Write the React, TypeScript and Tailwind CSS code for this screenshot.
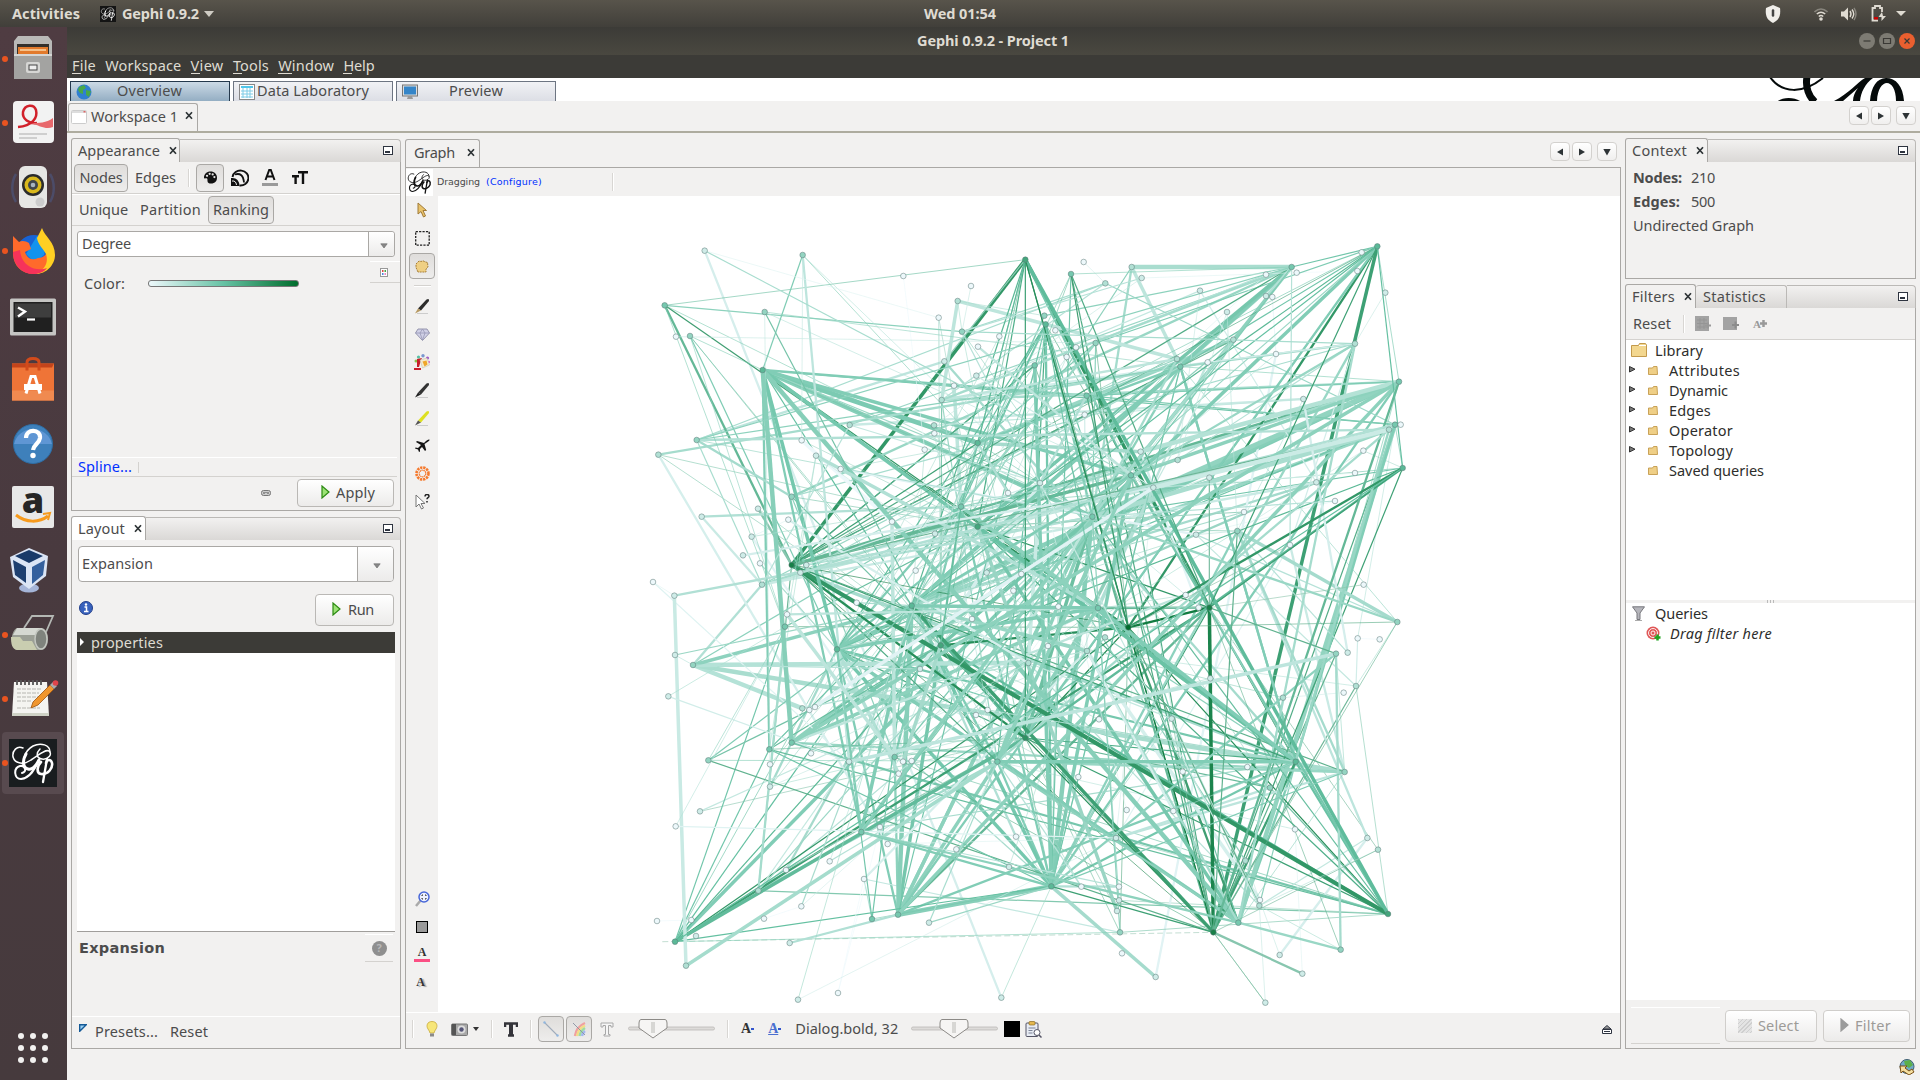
import React, { useLayoutEffect, useRef } from "react";

/* ---------- text that keeps a fixed advance width ---------- */
function T({ w, children, className = "" }: { w: number; children: string; className?: string }) {
  const ref = useRef<HTMLSpanElement>(null);
  useLayoutEffect(() => {
    const el = ref.current;
    if (!el) return;
    el.style.letterSpacing = "0px";
    el.style.width = "auto";
    const natural = el.getBoundingClientRect().width;
    el.style.letterSpacing = (w - natural) / children.length + "px";
    el.style.width = w + "px";
  }, [w, children]);
  return (
    <span ref={ref} className={"mb-[2px] inline-block shrink-0 whitespace-nowrap " + className}>
      {children}
    </span>
  );
}

/* ---------- graph data ---------- */
type N = { x: number; y: number; s: number };
const tile = (ox: number, oy: number, data: string): N[] =>
  data.trim().split(/\s+/).map((t) => {
    const [x, y, s] = t.split(",").map(Number);
    return { x: ox + x / 3, y: oy + y / 3, s };
  });

const groups: Record<string, N[]> = {
  A: tile(192, 24, `224,92,1 518,105,3 104,256,4 404,276,3 820,168,0 1023,198,0 983,243,2 1186,119,6 926,293,0 996,335,3
    1108,349,0 1044,380,0 138,350,0 180,348,3 398,450,5 943,424,1 1039,467,1 972,497,0 935,540,2 1214,436,4
    1243,287,3 1247,313,5 200,660,3 85,704,2 515,661,0 659,615,2 558,707,1 632,747,0 912,616,2 913,640,0
    884,689,0 1043,669,5 485,830,3 384,866,1 215,890,1 475,899,0 365,950,1 339,1006,1 390,1030,0 485,1035,8
    529,1035,1 511,1058,1 396,1094,2 69,1086,0 133,1127,1 786,905,0 993,860,4 1043,920,6 915,941,1 857,1052,0
    1070,1058,1 1174,1062,0 1134,819,0 1150,1112,0 845,1157,5 680,1148,0 471,1183,0 465,1220,4 1230,789,1 1026,1197,0`),
  B: tile(582, 24, `153,162,4 191,126,0 335,141,2 365,174,1 256,190,2 815,141,4 830,158,0 738,164,0 1072,79,5 1025,97,0
    1012,153,0 1096,218,1 540,212,1 738,228,1 757,231,0 621,276,1 640,359,2 227,369,3 106,331,0 168,382,0
    140,411,0 471,417,2 481,440,4 563,427,0 768,402,0 1005,371,2 1137,485,4 200,527,4 194,584,0 850,537,1
    1107,629,2 1125,614,4 1142,614,0 1030,692,0 1148,744,5 1005,759,0 889,787,1 945,843,0 362,695,1 473,720,2
    333,766,4 568,773,1 400,803,1 672,876,0 652,933,3 528,944,1 217,890,4 810,975,0 1031,1094,0 497,1125,0
    568,1163,8 536,1163,0 234,1164,4 325,1222,9 1132,1206,3 115,1160,0`),
  C: tile(192, 404, `135,165,1 189,195,3 115,289,1 621,148,5 932,136,6 870,207,1 517,325,2 538,330,0 555,321,0 485,428,4
    418,448,4 235,481,3 543,460,0 420,493,0 657,485,1 420,560,1 210,634,1 137,679,0 1195,189,2 1038,345,0
    1073,330,0 1186,414,7 794,471,4 819,485,0 845,483,0 806,521,0 1102,485,4 694,696,4 750,681,0 773,732,0
    599,784,0 979,748,0 1158,710,0 1137,801,1 468,810,0 385,872,2 702,837,0 514,919,0 402,956,0 81,963,0
    184,960,0 198,1008,1 135,1025,5 168,1097,2 479,1029,1 726,957,4 804,944,4 897,968,1 504,1199,1 624,1179,0
    1114,1193,1`),
  D: tile(582, 404, `255,112,2 201,153,2 84,138,0 237,358,0 455,356,1 175,531,0 488,515,0 320,630,0 460,633,0 288,714,1
    94,859,5 184,860,0 297,860,0 297,901,1 291,933,1 300,997,3 306,1060,0 407,1131,1 580,997,8 655,968,4
    718,917,2 720,900,0 676,782,2 750,563,3 827,485,5 682,501,0 825,688,0 789,293,2 948,161,3 983,158,1
    1013,115,0 1079,118,0 1008,258,2 971,278,0 974,516,3 1042,714,1 1074,749,2 1104,942,6 962,1049,3 847,1121,1
    779,1065,1 736,1208,1 571,235,1`),
};
const node = (id: string): N => groups[id[0]][Number(id.slice(1))];
const allNodes = Object.values(groups).flat();

/* each record: source, then target:weight list */
const links = `
A0 C50:3 B40:2 A8:1|A1 A14:2 C14:3 A24:1 A31:1 A58:1|A2 A7:1 A9:2 A39:3 B53:2 B46:1 A57:1|A3 C13:1 C4:2 B42:1 B22:1
A4 A30:1|A5 A9:1|A6 A18:4 B21:4 A9:1|A7 A39:4 B50:4 B53:2 C21:2 D37:4 A46:1 A31:2 C4:1 A47:2 A54:2 A15:2 B40:3 D18:2
A8 A18:1|A9 B25:2 B46:1 A58:2|A12 B17:1|A13 A14:1 C4:1 A57:1 C3:2 A54:1
A14 B40:4 B46:5 B53:2 B31:2 C9:5 C3:4 D19:5 C10:3 C27:3 D24:4 A54:2 A47:1 B27:3 A31:5
A22 B4:2 A15:3 B5:2 B30:3 A32:3 A42:2 B46:1 B22:2|A23 B22:3 C29:3 A47:1 C4:1|A25 B5:2 B29:3 A42:2|A26 A57:1 B52:4 C10:1
A24 A45:4|A27 B45:3|A34 A46:3 A42:3|A33 A39:3 C4:1|A36 C23:3 A35:1 B40:1|A37 B42:3|A44 B46:3 C43:4|A43 A44:1 C14:2
A42 B36:3 B26:3|A32 B25:2 B5:3 C22:2|A40 B30:3 B26:3|A41 B31:3 B22:2
A39 D37:6 C21:3 B5:2 B8:1 B22:2 B16:2 D18:1 A19:2 B26:3 C35:2 B30:2 D24:2 C26:2 A31:2 D34:2 B53:1 B40:1
A20 A6:1 A54:2 A46:1|A21 A54:2 C21:2 B53:1 A46:2 C26:2 B46:3 D19:2 A31:2 C46:2 C3:2 B50:1 D10:3|A19 A39:2 B53:1 C3:1
B0 B53:2 B50:2 A54:1 D10:2 B5:1 D18:2 A47:1|B1 B4:1|B2 B5:5 B21:4 B46:3 A54:2|B3 B6:1 A28:1 A9:2|B4 A9:2 B31:2 A18:2
B5 B46:4 A47:4 A54:4 B22:5 B8:2 A20:2 C27:2 B47:2 A18:3 B13:3
B7 A19:2 A58:1|B12 A18:2 B36:2 B39:1|B14 B24:2|B24 D17:3 B22:1|B15 B44:1 B39:1|B16 A54:2 B46:3 B42:2|B17 A46:3 B53:1 B8:2 A31:2
B8 C21:2 B53:3 D18:4 B34:2 B50:2 A54:2 A47:2 C46:3 B38:2 B46:4 B26:1 B22:2 B27:1|B9 B8:1|B10 B6:1|B11 B25:1
B21 B27:2 B46:3 A18:3|B22 A31:3 A54:4 C3:3 B54:1 D24:3 B46:3 A42:2 D10:2|B23 A18:3 B25:2
B25 A54:3 D19:3 B22:3 B39:2 D10:3 B47:2
B26 B22:1 A18:3 B46:5 A54:5 C3:4 C9:4 B38:5 D18:3 C46:4 B40:4 D10:3 D24:1 B27:2
B29 A28:2 B44:1|B30 A42:3 A54:4 B42:5 C26:3 D24:3 B46:5 A41:2|B31 D24:3 D19:5 B27:2 D18:2 B46:3 C3:2|B33 B44:1 B34:1|B35 B42:1
B34 B53:3 B50:2 C21:3 C4:2 D18:2 B46:2 A46:1 B31:1|B36 C4:3 A54:3|B37 B45:1 B46:2|B41 B50:2 B46:1|B43 A54:2
B44 B54:4 D10:3 D34:3 D35:3 B45:1 A47:1|B45 B54:2|B47 D9:2 B53:1|B48 B50:1|B49 C9:3 C3:1
B50 D18:4 B53:3 C42:3 A47:2 D24:2 D10:2 C46:3 B52:3|B52 A54:4 D24:4 A46:4 C26:4 C9:4
B53 C42:2 D18:2 C21:2 D37:2 A57:1 D19:3 A47:3 C4:1|B54 B46:3 D18:1 B53:1 D32:1
C0 A54:2 C1:1|C1 A54:4 C18:5 D34:5 C6:5 A42:3 A46:2 C5:2|C2 C14:2 A57:1|C11 A54:2 D24:1 D18:2 C4:2 A57:1|C15 C22:1 A54:1
C16 C18:2 C21:1|C17 D9:2 A57:1|C10 A54:2 C21:1 D37:2 C4:2|C9 B46:4 D37:3 D34:3 C4:4|C12 A54:1|C35 D37:2 C26:3 B46:2 A57:3 C14:2
C42 C21:4 D10:2 D15:1 A57:2 C3:1 C4:2 B46:4 A54:2 C10:2 B34:2|C43 C26:4|C44 C46:3|C45 C3:2 D10:1 A54:2
C46 D10:5 A54:5 C4:4 B46:4 C26:4 C3:3|C47 D10:2 C26:2|C48 A54:1 D9:1|C49 C36:1 C28:1|C50 D10:1|C39 C40:1|C37 C38:1 D1:1
C36 C45:2 D15:2|C27 D19:3 D10:3 B46:4 C3:3 A54:4|C34 C21:2|C30 C26:2|C29 D9:1|C3 D19:4 D10:4 C21:2 D24:3 A46:3 B40:3 B52:3
C4 D18:1 B46:4 D37:3 A46:3|C22 D18:1 C21:1 C46:3 B46:2 D37:1|C26 D10:3 D24:4 B46:4 D19:3|C21 D18:2 B46:4 D24:2 D37:2 A54:4
D10 B46:5 D24:3 D17:4 A54:4 D34:2 D18:2 D28:3 B40:4|D18 D39:3 D41:1 D24:3 D28:2 D32:2 D22:2 B46:3 B40:2 B44:2 B27:2 D4:1 A54:4
D37 B40:3 B46:2 A47:2 D23:2 D24:3 D15:1 D32:1 D13:1 D9:1|D19 D38:3 D27:1 D1:3 D34:1 A47:4|D34 C26:3 D9:3 D28:1 B47:3
D35 D40:3 D20:2|D36 B50:1 D18:1 D20:1|D38 D28:3 B50:1 D20:1|D39 D26:1|D40 D22:1|D32 B45:2 D1:1|D30 D32:2 B31:1 D31:1
D28 C14:4 B50:2|D29 B29:3 B44:2|D24 A47:4 C46:3 B22:3 D19:3 A46:3 D20:2|D15 B53:1 C21:1 B46:2|D12 C27:2|D14 C21:1|D20 B53:2 D4:3
D41 D18:1 D20:1|D33 D27:1|D26 C26:1|D23 C21:2 D9:3 C3:2`;

type E = { a: N; b: N; w: number };
const edges: E[] = [];
links.split(/[|\n]/).forEach((rec) => {
  const [src, ...targets] = rec.trim().split(/\s+/);
  if (!src) return;
  targets.forEach((t) => {
    const [id, w] = t.split(":");
    edges.push({ a: node(src), b: node(id), w: Number(w) });
  });
});
const inner = allNodes.filter((n) => n.x > 320 && n.x < 850 && n.y > 120 && n.y < 720);
const hubs = ["A47", "A54", "B46", "C3", "C4", "B42", "A58", "B52", "C26", "A31", "C18", "C22", "D24", "B40", "D10", "A46", "D1"].map(node);
for (let i = 0; i < 150; i++) {
  edges.push({ a: inner[(i * 37) % inner.length], b: hubs[(i * 7) % hubs.length], w: [1, 3, 2, 1, 4, 1, 2][i % 7] });
}
const order = edges.map((e, i) => ({ e, k: (i * 7919) % 613 })).sort((p, q) => p.k - q.k).map((p) => p.e);

const ramp = (s: number): number[] => {
  const lo = [237, 248, 251], mid = [102, 194, 164], hi = [0, 109, 44];
  const t = s / 9;
  const [p, q, f] = t < 0.5 ? [lo, mid, t * 2] : [mid, hi, t * 2 - 1];
  return p.map((v, i) => Math.round(v + (q[i] - v) * f));
};
const rgb = (c: number[]) => `rgb(${c.join(",")})`;
const widths = [0, 0.6, 1.2, 2.3, 3.5, 4.5, 4.2];
/* mid-weight edges are drawn paler than the hairlines, the heaviest one keeps its full tone */
const tone = [1, 0.92, 0.92, 0.8, 0.8, 0.76, 1];

function GraphCanvas() {
  return (
    <svg width="1182" height="816" viewBox="0 0 1182 816" className="block bg-white">
      <path d="M224.300 745.700L775.300 736.300" stroke="#b5d5c8" strokeWidth=".8" strokeDasharray="6 3" />
      {order.map(({ a, b, w }, i) => {
        const dark = a.s + b.s > 12;
        const k = dark ? 0.97 : tone[w];
        const ca = ramp(a.s * k), cb = ramp(b.s * k);
        return (
          <line key={i} x1={a.x} y1={a.y} x2={b.x} y2={b.y} strokeWidth={widths[w]}
            stroke={rgb(ca.map((v, j) => Math.round((v + cb[j]) / 2)))} />
        );
      })}
      {allNodes.map((n, i) => (
        <circle key={i} cx={n.x} cy={n.y} r="2.8" fill={rgb(ramp(n.s))} stroke="#5c7a78" strokeOpacity=".65" strokeWidth=".8" />
      ))}
    </svg>
  );
}

/* ---------- small shared pieces ---------- */
const Close = ({ className = "" }: { className?: string }) => (
  <svg width="8" height="9" viewBox="0 0 8 9" className={"mb-[2px] shrink-0 " + className}>
    <path d="M1 1.200L7 7.800M7 1.200L1 7.800" stroke="#2e3436" strokeWidth="1.700" />
  </svg>
);
const Minimize = () => (
  <svg width="10" height="9" viewBox="0 0 10 9" className="mb-[2px] shrink-0">
    <rect x=".5" y=".5" width="9" height="8" fill="#fff" stroke="#2e3440" />
    <rect x="2" y="5" width="5" height="2" fill="#2e3440" />
  </svg>
);
const VSep = ({ className = "" }: { className?: string }) => (
  <span className={"h-[18px] w-[2px] shrink-0 border-r border-white bg-[#d8d6d3] " + className} />
);
const NavBtn = ({ d, className = "" }: { d: string; className?: string }) => (
  <span className={"flex h-[19px] w-[20px] items-center justify-center rounded-[4px] border border-[#d3d1ce] bg-gradient-to-b from-white to-[#f0efee] " + className}>
    <svg width="10" height="10" viewBox="0 0 10 10"><path d={d} fill="#2e3436" /></svg>
  </span>
);
const NavSet = () => (
  <div className="flex">
    <NavBtn d="M8 1.500v7L2 5z" />
    <NavBtn d="M2 1.500v7L8 5z" className="ml-[2px]" />
    <NavBtn d="M1.300 2h7.400L5 8.500z" className="ml-[5px] border-[#aaa8a5]" />
  </div>
);
function TabBar({ title, w, tabW, white, extra }: { title: string; w: number; tabW: string; white?: boolean; extra?: React.ReactNode }) {
  return (
    <div className="flex h-[24px] shrink-0">
      <div className={"flex shrink-0 items-center rounded-t-[3px] border-l border-r border-t border-[#aaa8a5] pl-[6px] pt-px " + tabW + (white ? " bg-white" : " bg-[#f2f1f0]")}>
        <T w={w}>{title}</T>
        <Close className="ml-[9px]" />
      </div>
      {extra}
      <div className="mt-px flex flex-1 items-center justify-end rounded-tr-[4px] border-r border-t border-[#bbb9b6] bg-gradient-to-b from-[#f2f1f0] to-[#dad8d6] pr-[7px]">
        <Minimize />
      </div>
    </div>
  );
}
const ComboArrow = () => (
  <svg width="8" height="6" viewBox="0 0 8 6"><path d="M.8.8h6.400L4 5z" fill="#888" stroke="#666" strokeWidth=".6" /></svg>
);
const Play = ({ gray }: { gray?: boolean }) => (
  <svg width="9" height="14" viewBox="0 0 9 14" className="mb-[2px] shrink-0">
    <path d="M1 1v12l7-6z" fill={gray ? "#9b9b9b" : "#9be275"} stroke={gray ? "#9b9b9b" : "#2c8a12"} strokeWidth="1.200" />
  </svg>
);
const pressed = "border border-[#aaa8a5] bg-gradient-to-b from-[#dfdddb] to-[#eeedec] rounded-[4px]";
const btn = "flex items-center rounded-[4px] border border-[#bab8b5] bg-gradient-to-b from-white to-[#ecebea]";

const Script = ({ size, color, bg }: { size: number; color: string; bg: string }) => (
  <svg width={size} height={size} viewBox="0 0 48 48" className="shrink-0">
    <rect width="48" height="48" fill={bg} />
    <g fill="none" stroke={color} strokeLinecap="round">
      <path strokeWidth="1.500" d="M14 9C8 6 3 12 4 18c2 7 11 8 18 3 8-5 14-11 18-9 4 3-1 9-7 8-6-1-6-6-2-10" />
      <path strokeWidth="1.500" d="M41 13c0-7-9-10-17-6-9 5-12 17-8 23" />
      <path strokeWidth="3" d="M17 15c-4 7-3 14 2 15 4 1 8-3 11-9" />
      <path strokeWidth="2" d="M30 21c-4 9-9 18-18 19C5 40 4 29 11 27c6-1 7 6 2 7" />
      <path strokeWidth="2.300" d="M34 43l4-23" />
      <path strokeWidth="2.600" d="M32 23c-4 4-5 11 0 12 7 1 12-6 11-11-1-4-5-4-6 0" />
    </g>
  </svg>
);

/* ---------- dock ---------- */
const dock: { dot?: boolean; art: React.ReactNode }[] = [
  { dot: true, art: (
    <g transform="translate(0 1)">
      <path d="M5 5l4-5h30l4 5v38H5z" fill="#b9b9b7" /><rect x="8" y="8" width="32" height="14" fill="#33302c" />
      <path d="M9 11h30v9H9z" fill="#e27a2c" /><path d="M11 14h26" stroke="#fbd9a8" strokeWidth="1.500" />
      <rect x="5" y="18" width="38" height="25" fill="#a3a3a1" /><rect x="5" y="18" width="38" height="2" fill="#d6d6d4" />
      <rect x="17" y="26" width="14" height="11" rx="2" fill="#d6d6d4" /><rect x="20" y="29" width="8" height="5" fill="#eee" stroke="#444" />
    </g>) },
  { dot: true, art: (
    <g transform="translate(0 -1)">
      <rect x="4" y="3" width="41" height="42" rx="4" fill="#f2f2f2" />
      <path d="M9 29c14-1 20-9 18-17-2-6-11-6-13 2-1 7 6 12 14 11" fill="none" stroke="#d1202a" strokeWidth="2.500" />
      <path d="M22 25c8 0 15 0 22-5v9c-7 3-13-1-22-4z" fill="#e8686c" />
      <path d="M10 36h28M10 40h18" stroke="#c4c4c4" strokeWidth="1.500" />
    </g>) },
  { art: (
    <g transform="translate(0 1)">
      <path d="M7 10c-5 8-5 20 0 28M41 10c5 8 5 20 0 28" stroke="#4c4c68" strokeWidth="2.500" fill="none" />
      <rect x="10" y="2" width="28" height="42" rx="6" fill="#e6e6e4" /><circle cx="24" cy="21" r="11" fill="#2a2b2c" />
      <circle cx="24" cy="21" r="8.500" fill="#d9b81c" /><circle cx="24" cy="21" r="5" fill="#3f454b" /><circle cx="24" cy="21" r="2.300" fill="#a7b4c0" />
      <circle cx="31" cy="38" r="4.500" fill="#ccc" />
    </g>) },
  { dot: true, art: (
    <g transform="translate(0 1)">
      <circle cx="25" cy="25" r="18" fill="#1763d6" /><path d="M28 8c6 5 9 12 7 19l-9 8-9-9z" fill="#1393ee" />
      <path d="M4 8l6 6c3-2 7-1 10 1l2 6-6 3c2 7 8 9 13 6 6 0 10-4 10-12l6 7c0 13-9 21-20 21C12 46 4 37 4 25z" fill="#ff6a2b" />
      <path d="M28 10l5-10c3 9 13 14 13 27 0 10-9 19-19 19 8-4 13-11 10-20-3-6-8-9-9-16z" fill="#ffcf23" />
      <path d="M4 24c0 13 9 22 20 22 6 0 11-2 14-6-10 4-26-1-27-18z" fill="#f6335a" />
    </g>) },
  { art: (
    <g transform="translate(0 1.500)">
      <rect x="1" y="6" width="46" height="37" rx="1.500" fill="#c5c5c3" /><rect x="4.500" y="9.500" width="39" height="30" fill="#202020" />
      <rect x="6" y="11" width="36" height="14" fill="#3e3e3e" />
      <path d="M9 15l7 4-7 5" stroke="#fff" strokeWidth="2.400" fill="none" /><path d="M18 27h8" stroke="#fff" strokeWidth="2.200" />
    </g>) },
  { art: (
    <g transform="translate(0 1.500)">
      <path d="M3 7h42v37H3z" fill="#ef7437" /><path d="M3 7h42l-2 4H3z" fill="#c4441b" /><path d="M3 34h42v10H3z" fill="#f08a50" />
      <path d="M18 14V6q0-4 6-4t6 4v8" stroke="#d24b1b" strokeWidth="3" fill="none" />
      <path d="M17 37l5-17h4l5 17M15 29h18M15 32h18" stroke="#fff" strokeWidth="3" fill="none" />
    </g>) },
  { art: (
    <g transform="translate(0 1)">
      <circle cx="24" cy="24" r="19.500" fill="#3e80bb" /><path d="M5 24a19.500 19.500 0 0 1 38 0z" fill="#5f96d4" /><circle cx="24" cy="24" r="19.500" fill="none" stroke="#2e6da4" />
      <path d="M17 18c0-10 15-9 14 0-1 6-6 6-7 12" stroke="#fff" strokeWidth="4.200" fill="none" /><circle cx="24" cy="35.500" r="2.700" fill="#fff" />
    </g>) },
  { art: (
    <g>
      <rect x="3" y="3" width="42" height="42" rx="2" fill="#e8e8e8" />
      <text x="24" y="30" fontFamily="Open Sans" fontWeight="800" fontSize="36" textAnchor="middle" fill="#262626">a</text>
      <path d="M7 32c10 8 23 8 32 1" stroke="#f79a1c" strokeWidth="3" fill="none" /><path d="M34 31l7-1-2 7" stroke="#f79a1c" strokeWidth="2" fill="none" />
    </g>) },
  { art: (
    <g>
      <ellipse cx="20" cy="41" rx="10" ry="4.500" fill="#a5b5d8" />
      <path d="M20 1l19 8-2 20-17 13L4 30 1 10z" fill="#dbe5f5" /><path d="M20 3l14 6-14 7L6 9z" fill="#193a69" />
      <path d="M4 13l13 7v16L6 28z" fill="#1d3f70" /><path d="M36 13l-13 7v17l11-9z" fill="#34609d" />
    </g>) },
  { dot: true, art: (
    <g transform="translate(0 2)">
      <path d="M15 15L23 3h21l-10 23" stroke="#b4b8b4" strokeWidth="1.800" fill="none" />
      <path d="M8 15h25c8 2 8 20 0 22H8C1 35 1 18 8 15z" fill="#9b9f96" /><path d="M8 15h25v7H4z" fill="#d5d8d2" />
      <ellipse cx="32" cy="26" rx="6" ry="10" fill="#7f837d" stroke="#c3c6c0" strokeWidth="1.500" /><path d="M2 24h9l3 4h9l5 9H8C3 36 2 31 2 24z" fill="#c9cdb0" />
    </g>) },
  { dot: true, art: (
    <g transform="translate(0 2)">
      <path d="M5 5h33l2 34H3z" fill="#f4f4f1" /><path d="M3 36h37v3H3z" fill="#cfd2c6" />
      <path d="M8 12h25M8 16h22M8 20h24M8 24h14M8 31h23" stroke="#b5b5b2" strokeWidth="1.200" strokeDasharray="4 1" />
      <path d="M8 3v5M12 3v5M16 3v5M20 3v5M24 3v5M28 3v5M32 3v5" stroke="#555" strokeWidth="1.800" />
      <path d="M22 31l2-6L41 8l4 4-16 16z" fill="#f0962e" stroke="#9c5410" strokeWidth=".8" /><path d="M41 8l3-3 4 4-3 3z" fill="#aaa" /><circle cx="46.500" cy="6" r="2.800" fill="#e0444b" />
    </g>) },
];
function Dock() {
  return (
    <aside className="flex w-[67px] shrink-0 flex-col bg-gradient-to-b from-[#4f3c42] via-[#493a3f] to-[#463a3d]">
      <div className="flex flex-col">
        {dock.map((d, i) => (
          <div key={i} className="flex h-[64px] items-center">
            <span className={"ml-[2px] h-[6px] w-[6px] rounded-full " + (d.dot ? "bg-[#e95420]" : "")} />
            <svg width="48" height="48" viewBox="0 0 48 48" className="ml-px shrink-0 overflow-visible">{d.art}</svg>
          </div>
        ))}
        <div className="ml-[2px] mt-px flex h-[62px] w-[62px] items-center rounded-[4px] bg-[#584a4f]">
          <span className="h-[6px] w-[6px] rounded-full bg-[#e95420]" />
          <span className="ml-px"><Script size={48} color="#fff" bg="#191d1f" /></span>
        </div>
      </div>
      <div className="mb-[17px] ml-[18px] mt-auto grid w-[30px] grid-cols-3 gap-[6px]">
        {Array.from({ length: 9 }, (_, i) => <span key={i} className="h-[6px] w-[6px] rounded-full bg-[#f2f1f0]" />)}
      </div>
    </aside>
  );
}

/* ---------- header ---------- */
function TopBar() {
  return (
    <header className="flex h-[27px] shrink-0 items-center bg-gradient-to-b from-[#58544b] to-[#413f3a] font-bold text-[#dfdbd2]">
      <T w={68} className="ml-[12px]">Activities</T>
      <span className="ml-[20px]"><Script size={16} color="#fff" bg="#141414" /></span>
      <T w={77} className="ml-[6px]">Gephi 0.9.2</T>
      <svg width="10" height="6" className="ml-[5px]"><path d="M0 0h10L5 6z" fill="#cfccc4" /></svg>
      <T w={72} className="ml-[710px]">Wed 01:54</T>
      <svg width="16" height="18" viewBox="0 0 16 18" className="ml-[769px]">
        <path d="M8 0l7 3c1 8-1 12-7 15C2 15 0 11 1 3z" fill="#f0eeea" /><path d="M8 5.500v5" stroke="#444" strokeWidth="2.500" strokeLinecap="round" />
      </svg>
      <svg width="14" height="14" viewBox="0 0 14 14" className="ml-[33px]">
        <g fill="none" strokeWidth="1.600"><path d="M.5 5q6.500-6 13 0" stroke="#88857d" /><path d="M2.800 7q4.200-3.500 8.400 0M4.800 9.500q2.200-2 4.400 0" stroke="#dfdbd2" /></g><circle cx="7" cy="12" r="1.800" fill="#dfdbd2" />
      </svg>
      <svg width="16" height="14" viewBox="0 0 16 14" className="ml-[13px]">
        <path d="M0 4.500h3l4-4v13l-4-4H0z" fill="#dfdbd2" /><path d="M9 4q2 3 0 6M11 2.500q3.500 4.500 0 9" stroke="#dfdbd2" fill="none" strokeWidth="1.400" /><path d="M13 1q4 6 0 12" stroke="#88857d" fill="none" strokeWidth="1.400" />
      </svg>
      <svg width="15" height="17" viewBox="0 0 15 17" className="ml-[14px]">
        <path d="M11 7V3H9V1H4v2H1.500v12.500H7" stroke="#dfdbd2" strokeWidth="1.800" fill="none" /><path d="M3 12h4v2.500H3z" fill="#c00" /><path d="M11 7l-3.500 5h3v4L15 11h-3z" fill="#dfdbd2" />
      </svg>
      <svg width="10" height="5" className="ml-[10px]"><path d="M0 0h10L5 5z" fill="#dfdbd2" /></svg>
    </header>
  );
}
const menus: [string, number][] = [["File", 24], ["Workspace", 76], ["View", 33], ["Tools", 36], ["Window", 56], ["Help", 31]];

function TitleAndMenu() {
  return (
    <>
      <div className="flex h-[28px] shrink-0 items-center bg-gradient-to-b from-[#3c3b37] to-[#4a4840] font-bold text-[#dfdbd2]">
        <T w={152} className="ml-[850px]">Gephi 0.9.2 - Project 1</T>
        <div className="ml-[790px] flex gap-[4px]">
          {[["M4.500 8h7", "bg-[#7d7b73]"], ["M4.500 5.500h7v5h-7z", "bg-[#7d7b73]"], ["M5.500 5.500l5 5M10.500 5.500l-5 5", "bg-[#ea5f2f]"]].map(([d, c]) => (
            <span key={d} className={"flex h-[16px] w-[16px] rounded-full " + c}><svg width="16" height="16"><path d={d} stroke="#3a3935" strokeWidth="1.200" fill="none" /></svg></span>
          ))}
        </div>
      </div>
      <nav className="flex h-[23px] shrink-0 items-center gap-[9.300px] bg-[#3c3b37] pb-[2px] pl-[5px] text-[#dfdbd2]">
        {menus.map(([m, w]) => (
          <span key={m} className="relative flex">
            <T w={w}>{m}</T>
            {m !== "Workspace" && <i className={"absolute bottom-[3px] left-0 h-px bg-[#dfdbd2] " + (m === "Window" ? "w-[14px]" : "w-[9px]")} />}
          </span>
        ))}
      </nav>
    </>
  );
}

function Banner() {
  return (
    <div className="flex h-[23px] shrink-0 items-end bg-white pl-[3px]">
      <div className="flex h-[20px] w-[160px] items-center border border-b-0 border-[#24384c] bg-gradient-to-b from-[#ccdae6] to-[#94aec3]">
        <svg width="16" height="16" viewBox="0 0 16 16" className="ml-[5px]"><circle cx="8" cy="8" r="7.500" fill="#2f7fd0" /><path d="M3 3l5-2 2 3-3 2v4l-3-1-2-3zM10 6l5 1-2 6-3-2z" fill="#48a84a" /></svg>
        <T w={65} className="mb-[4px] ml-[25px]">Overview</T>
      </div>
      <div className="ml-[3px] flex h-[20px] w-[160px] items-center border border-b-0 border-[#6d7582] bg-gradient-to-b from-[#f1f2f5] to-[#dcdee5]">
        <svg width="16" height="16" viewBox="0 0 16 16" className="ml-[5px]"><rect x=".5" y=".5" width="15" height="15" fill="#fff" stroke="#888" /><rect x="2" y="2" width="12" height="2" fill="#51c6ea" /><path d="M4 4v10M2 7h12M2 10h12M2 13h12M8 4v10M11 4v10" stroke="#7fcbe6" /></svg>
        <T w={112} className="mb-[4px] ml-[2px]">Data Laboratory</T>
      </div>
      <div className="ml-[3px] flex h-[20px] w-[160px] items-center border border-b-0 border-[#6d7582] bg-gradient-to-b from-[#f1f2f5] to-[#dcdee5]">
        <svg width="16" height="16" viewBox="0 0 16 16" className="ml-[5px]"><rect x=".5" y="1" width="15" height="11" fill="#ddd" stroke="#777" /><rect x="2" y="2.500" width="12" height="8" fill="#3585c8" /><path d="M6 12h4l1 3H5z" fill="#999" /></svg>
        <T w={54} className="mb-[4px] ml-[31px]">Preview</T>
      </div>
      <svg width="150" height="23" viewBox="1765 78 150 23" className="ml-auto mr-[5px]">
        <g fill="none" stroke="#050a0a">
          <path d="M1770 77c12 17 33 17 53 1" strokeWidth="2" /><path d="M1807 77c-2 10 2 20 8 25" strokeWidth="7" />
        </g>
        <path d="M1778 101c5-4 16-4 22 0z" fill="#050a0a" />
        <path d="M1834 101c14-7 24-19 31-23h8c-8 6-12 14-13 23h-7c0-5 2-9 5-13l-15 13z" fill="#050a0a" />
        <path d="M1870 101c1-14 7-23 16-23 10 0 17 8 18 23h-8c0-24-18-24-19 0z" fill="#050a0a" />
      </svg>
    </div>
  );
}

/* ---------- left column ---------- */
function Appearance() {
  return (
    <section className="flex h-[373px] flex-col">
      <TabBar title="Appearance" w={82} tabW="w-[109px]" />
      <div className="flex flex-1 flex-col border border-t-0 border-[#aaa8a5]">
        <div className="flex h-[32px] items-center border-b border-[#d4d2cf] pl-[2px]">
          <span className={"flex h-[28px] w-[54px] items-center justify-center " + pressed}><T w={43}>Nodes</T></span>
          <T w={41} className="ml-[7px]">Edges</T>
          <VSep className="ml-[12px]" />
          <span className={"ml-[6px] flex h-[28px] w-[28px] items-center justify-center " + pressed}>
            <svg width="13" height="13" viewBox="0 0 15 14"><path d="M7.500 0C3 0 0 3 0 7c0 2 2 1 3 1s1 1 1 3 2 3 4 3c5 0 7-3 7-7s-3-7-7.500-7z" fill="#111" /><g fill="#e6e5e4"><circle cx="3.500" cy="5" r="1.300" /><circle cx="6.500" cy="2.800" r="1.300" /><circle cx="10" cy="3.500" r="1.300" /><circle cx="12" cy="6.500" r="1.300" /></g></svg>
          </span>
          <svg width="18" height="18" viewBox="0 0 18 18" className="ml-[7px]"><path d="M1.500 8a8 7.500 0 1 1 7 8.500" fill="none" stroke="#111" strokeWidth="1.900" /><path d="M4 5.500q8-2.500 9 8" fill="none" stroke="#111" strokeWidth="1.800" /><path d="M0 9q8-1 8.500 8H0z" fill="#111" /><path d="M1 12q4-.5 4.500 4" stroke="#f2f1f0" fill="none" /></svg>
          <svg width="16" height="19" viewBox="0 0 16 19" className="ml-[13px]"><path d="M3.500 12L7.200 2h1.600l3.700 10M5 8.500h6" stroke="#111" strokeWidth="2" fill="none" /><rect y="15" width="16" height="3" fill="#9a9a9a" /></svg>
          <svg width="16" height="13" viewBox="0 0 16 13" className="ml-[14px]"><path d="M6 1.200h10M11 1v12M0 5.200h7M3.600 5v8" stroke="#111" strokeWidth="2.400" /></svg>
        </div>
        <div className="flex h-[32px] items-center border-b border-t border-b-[#d4d2cf] border-t-white pl-[7px]">
          <T w={49}>Unique</T><T w={61} className="ml-[12px]">Partition</T>
          <span className={"ml-[7px] flex h-[28px] w-[66px] items-center justify-center " + pressed}><T w={56}>Ranking</T></span>
        </div>
        <div className="ml-[5px] mt-[5px] flex h-[26px] w-[318px] rounded-[3px] border border-[#aaa8a5] bg-white">
          <T w={49} className="ml-[4px] leading-[23px]">Degree</T>
          <span className="ml-auto flex w-[26px] items-center justify-center rounded-r-[3px] border-l border-[#aaa8a5] bg-gradient-to-b from-white to-[#ecebea] pl-[4px] pt-[3px]"><ComboArrow /></span>
        </div>
        <div className="flex h-[44px] items-start pl-[12px] pt-[4px]">
          <T w={41} className="mt-[12px]">Color:</T>
          <span className="ml-[23px] mt-[19px] h-[7px] w-[151px] rounded-[3px] border border-[#777] bg-[linear-gradient(90deg,#edf8fb,#66c2a4_50%,#006d2c)]" />
          <span className="ml-auto flex h-[22px] w-[30px] items-center justify-center border-b border-t border-b-[#d4d2cf] border-t-white pr-[3px]">
            <svg width="8" height="9" viewBox="0 0 8 9"><rect x=".5" y=".5" width="7" height="8" fill="#fff" stroke="#999" /><rect x="2" y="2" width="1.500" height="2" fill="#d44" /><rect x="4.500" y="2" width="1.500" height="2" fill="#4a4" /><rect x="2" y="5" width="1.500" height="2" fill="#48d" /><rect x="4.500" y="5" width="1.500" height="2" fill="#e8b" /></svg>
          </span>
        </div>
        <div className="mt-auto flex h-[20px] w-[325px] items-center border-b border-t border-b-[#d4d2cf] border-t-white pl-[6px] text-[#0030ff]">
          <T w={54}>Spline...</T><span className="ml-[6px] h-[11px] w-px bg-[#d4d2cf]" />
        </div>
        <div className="flex h-[33px] shrink-0 items-center pb-[2px] pr-[6px]">
          <svg width="10" height="6" viewBox="0 0 10 6" className="ml-[189px]"><rect x=".5" y=".5" width="9" height="5" rx="2" fill="#ccc" stroke="#777" /><path d="M2 3h2M6 3h2M4.500 2.500h1" stroke="#555" /></svg>
          <span className={btn + " ml-auto h-[28px] w-[97px] pl-[23px]"}><Play /><T w={39} className="ml-[6px]">Apply</T></span>
        </div>
      </div>
    </section>
  );
}

function Layout() {
  return (
    <section className="mt-[5px] flex h-[533px] flex-col">
      <TabBar title="Layout" w={47} tabW="w-[75px]" white />
      <div className="flex flex-1 flex-col border border-t-0 border-[#aaa8a5]">
        <div className="ml-[6px] mt-[6px] flex h-[36px] w-[316px] shrink-0 rounded-[4px] border border-[#aaa8a5] bg-white">
          <T w={71} className="ml-[3px] leading-[33px]">Expansion</T>
          <span className="ml-auto flex w-[36px] items-center justify-center rounded-r-[3px] border-l border-[#aaa8a5] bg-gradient-to-b from-white to-[#ecebea] pl-[3px] pt-[3px]"><ComboArrow /></span>
        </div>
        <div className="mt-[12px] flex h-[32px] shrink-0 pl-[7px] pr-[6px]">
          <svg width="14" height="14" viewBox="0 0 14 14" className="mt-[7px]"><circle cx="7" cy="7" r="6.500" fill="#3862bd" stroke="#233f8a" /><path d="M5.500 6H7.500v4M5 10.500h4.500" stroke="#fff" strokeWidth="1.500" fill="none" /><circle cx="7" cy="3.500" r="1.200" fill="#fff" /></svg>
          <span className={btn + " ml-auto w-[79px] pl-[16px]"}><Play /><T w={26} className="ml-[7px]">Run</T></span>
        </div>
        <div className="mx-[5px] mt-[6px] flex h-[21px] shrink-0 items-center bg-[#3c3b37] text-[#dfdbd2]">
          <svg width="4" height="8" viewBox="0 0 4 8" className="mb-px ml-[3px]"><path d="M0 0v8l4-4z" fill="#fff" /></svg>
          <T w={72} className="ml-[7px]">properties</T>
        </div>
        <div className="mx-[5px] h-[279px] shrink-0 border-b border-[#a09e9b] bg-white" />
        <div className="flex items-start pl-[7px] pr-[7px] pt-[2px]">
          <T w={86} className="mt-[4px] font-['DejaVu_Sans'] text-[14.500px] font-bold">Expansion</T>
          <span className="ml-auto flex h-[28px] w-[28px] items-center justify-center border-b border-t border-b-[#d4d2cf] border-t-white">
            <span className="flex h-[15px] w-[15px] items-center justify-center rounded-full bg-[#8f8f8f] text-[11px] font-bold text-[#b8b8b8]">?</span>
          </span>
        </div>
        <div className="mt-auto flex h-[32px] items-center border-t border-white pb-[2px] pl-[7px]">
          <svg width="8" height="8" viewBox="0 0 8 8" className="mb-[8px]"><path d="M.7.700h6.600L.7 7.300z" fill="#9ad1f5" stroke="#155a97" strokeWidth="1.400" /></svg>
          <T w={63} className="ml-[8px]">Presets...</T><T w={38} className="ml-[12px]">Reset</T>
        </div>
      </div>
    </section>
  );
}

/* ---------- graph panel ---------- */
const Slot = ({ h, children }: { h: string; children?: React.ReactNode }) => (
  <span className={"flex w-[32px] shrink-0 items-center justify-center " + h}>{children}</span>
);
const Pen = ({ body, tip }: { body: string; tip: string }) => (
  <svg width="16" height="16" viewBox="0 0 16 16"><path d="M3 15.500h11" stroke="#ccc" /><path d="M4 10.500L12.500 1.500q3-1.500 2.500 1.500L7 12.500z" fill={body} /><path d="M4 10.500l3 2L1 15.500z" fill={tip} /></svg>
);
function GraphTools() {
  return (
    <div className="flex w-[32px] shrink-0 flex-col">
      <Slot h="h-[28px]"><svg width="14" height="16" viewBox="0 0 14 16"><path d="M3 1v11l3-2.500L8.500 15l2-1L8 8.500h3.500z" fill="#e9c36b" stroke="#a07a38" /></svg></Slot>
      <Slot h="h-[28px]"><svg width="15" height="15"><rect x=".7" y=".7" width="13.500" height="13.500" fill="none" stroke="#222" strokeWidth="1.300" strokeDasharray="2.200 1.200" /></svg></Slot>
      <Slot h="h-[28px]"><span className={"flex h-[26px] w-[26px] items-center justify-center " + pressed}><svg width="14" height="13" viewBox="0 0 14 13"><path d="M3 12L1 7.500 1 4l2-2 1-1 2 .5L8 .800l2 1 2.500.700L13 7l-2 2v3z" fill="#efcf83" stroke="#a8803a" strokeDasharray="2 .8" /></svg></span></Slot>
      <Slot h="h-[12px]"><span className="h-[2px] w-[17px] border-b border-white bg-[#d4d2cf]" /></Slot>
      <Slot h="h-[28px]"><Pen body="#2c2c2c" tip="#b79a63" /></Slot>
      <Slot h="h-[28px]"><svg width="15" height="13" viewBox="0 0 15 13"><path d="M3 1h9l2.500 4-7 7.500L.5 5z" fill="#d0d0e6" stroke="#8d8da6" strokeWidth=".9" /><path d="M.5 5h14M5 5l2.500 7L10 5 7.500 1z" stroke="#9898b5" strokeWidth=".8" fill="none" /></svg></Slot>
      <Slot h="h-[28px]"><svg width="16" height="16" viewBox="0 0 16 16"><circle cx="2" cy="7" r="1.500" fill="#8bc34a" /><circle cx="4.500" cy="3" r="1.600" fill="#59c0a4" /><circle cx="9" cy="1.800" r="1.700" fill="#7a96cf" /><circle cx="13.500" cy="4" r="1.600" fill="#a05bc8" /><circle cx="15" cy="8" r="1.200" fill="#d86bd0" /><path d="M3 5l5-1-1 2-2 7H3z" fill="#c8202c" /><path d="M6 6l7-2 2.500 7-7 3z" fill="#f6ead0" stroke="#bba" strokeWidth=".5" /><path d="M8.500 7.500l4-1 1 4-3 2z" fill="#efa72c" /><path d="M0 15h7" stroke="#c8202c" strokeWidth="2" /></svg></Slot>
      <Slot h="h-[28px]"><Pen body="#333" tip="#222" /></Slot>
      <Slot h="h-[28px]"><Pen body="#dde022" tip="#555" /></Slot>
      <Slot h="h-[27px]"><svg width="15" height="13" viewBox="0 0 15 13"><path d="M14.500.500Q13 0 11 2L9 4 2 2 1 3l5 3-3 3-2.500-.5L0 9.500l3 1 1 2.500 1-.5V10l2-2 3 4 1.200-1L9.500 5l3-2Q15 1.500 14.500.500z" fill="#151515" /></svg></Slot>
      <Slot h="h-[29px]"><svg width="15" height="15" viewBox="0 0 15 15"><circle cx="7.500" cy="7.500" r="6" fill="none" stroke="#f5792d" strokeWidth="2.600" strokeDasharray="2.300 .84" /><circle cx="7.500" cy="7.500" r="3.300" fill="none" stroke="#f5792d" strokeWidth="1.300" strokeDasharray="1.500 .5" /></svg></Slot>
      <Slot h="h-[28px]"><svg width="15" height="16" viewBox="0 0 15 16"><path d="M1 1v12l3-3 2.500 5 2-1L6 9.500h4z" fill="#fff" stroke="#777" /><path d="M10 2.500q0-2 2-2t2 1.700c0 1.500-2 1.500-2 3M12 7v1.500" stroke="#222" strokeWidth="1.500" fill="none" /></svg></Slot>
      <div className="flex-1" />
      <Slot h="h-[28px]"><svg width="15" height="16" viewBox="0 0 15 16"><path d="M1 15l5-6" stroke="#aaa" strokeWidth="2.500" /><circle cx="9" cy="6" r="5" fill="#eef2ff" stroke="#4867d8" strokeWidth="1.500" /><path d="M7 5V4h1M10 4h1v1M11 7v1h-1M8 8H7V7" stroke="#333" fill="none" /></svg></Slot>
      <Slot h="h-[27px]"><span className="h-[12px] w-[12px] border border-black bg-[#9a9a9a]" /></Slot>
      <Slot h="h-[29px]"><span className="flex w-[16px] flex-col items-center font-['Liberation_Serif'] text-[12px] font-bold leading-[10px] text-[#333]">A<i className="mt-[2px] h-[3px] w-[16px] bg-[#fb4f84]" /></span></Slot>
      <Slot h="h-[26px]"><span className="mr-[3px] font-['Liberation_Serif'] text-[12px] font-bold text-[#333] [text-shadow:2px_1px_1px_#aaa]">A</span></Slot>
      <div className="h-[17px]" />
    </div>
  );
}
const Slider = ({ at }: { at: number }) => (
  <svg width="87" height="22" viewBox="0 0 87 22" className="shrink-0">
    <rect x=".5" y="9" width="86" height="3" rx="1.500" fill="#dddbd9" stroke="#bbb9b6" strokeWidth=".8" />
    <g transform={`translate(${at - 25} 0)`}>
      <path d="M13 1.500h24q2 0 2 3.500v5L25 20 11 10V5q0-3.500 2-3.500z" fill="#f6f5f4" stroke="#8c8a87" /><path d="M24 4v11M26 4v11" stroke="#aaa8a5" strokeWidth=".8" />
    </g>
  </svg>
);
function BottomTools() {
  return (
    <div className="flex h-[36px] shrink-0 items-center border-t border-white pb-[3px]">
      <VSep className="ml-[6px]" />
      <svg width="12" height="17" viewBox="0 0 12 17" className="ml-[12px]"><path d="M6 .5C1 .5 0 5 2 8q1.500 2 2 4h4q.5-2 2-4c2-3 1-7.500-4-7.500z" fill="#f7e679" stroke="#c8a93a" strokeWidth=".8" /><path d="M4 12.500h4v3H4z" fill="#8b8b8b" /></svg>
      <svg width="17" height="13" viewBox="0 0 17 13" className="ml-[13px]"><rect x=".5" y="1" width="16" height="11.500" rx="1" fill="#a8a8a8" stroke="#777" /><rect x="1" y="1" width="4" height="11" fill="#555" /><circle cx="10.500" cy="6.500" r="4" fill="#ddd" /><circle cx="10.500" cy="6.500" r="2.200" fill="#557" /></svg>
      <svg width="6" height="4" className="ml-[5px]"><path d="M0 0h6L3 4z" fill="#333" /></svg>
      <VSep className="ml-[12px]" />
      <svg width="14" height="15" viewBox="0 0 14 15" className="ml-[11px]"><path d="M1 5V1.500h12V5M7 1.500v12M4 13.500h6" stroke="#34343a" strokeWidth="2.500" fill="none" /><path d="M7 2v11" stroke="#34343a" strokeWidth="4" /></svg>
      <VSep className="ml-[12px]" />
      <span className={"ml-[6px] flex h-[26px] w-[26px] items-center justify-center " + pressed}><svg width="16" height="16" viewBox="0 0 16 16"><path d="M2 2l12 12" stroke="#a0acba" strokeWidth="1.100" /><circle cx="1.500" cy="1.500" r="1.200" fill="#8fb6e0" /><circle cx="14.500" cy="14.500" r="1.200" fill="#8fb6e0" /></svg></span>
      <span className={"ml-[2px] flex h-[26px] w-[26px] items-center justify-center " + pressed}><svg width="16" height="16" viewBox="0 0 16 16"><g fill="none" strokeWidth="2.400"><path d="M4 15Q5 6 14 2" stroke="#f0a0a0" /><path d="M6 15Q7 8 14 4.500" stroke="#f3dc86" /><path d="M8.500 15q1-5 5.500-8" stroke="#9fdc9f" /><path d="M11 15q.5-3 3-5" stroke="#a3b8f0" /></g><path d="M2 2l12 12" stroke="#8891a0" strokeWidth=".9" /></svg></span>
      <svg width="14" height="15" viewBox="0 0 14 15" className="ml-[8px]"><path d="M1 5V1h12v4h-2V3.500H8.500v9H10V14H4v-1.500h1.500v-9H3V5z" fill="#f6f6f6" stroke="#a8a8a8" /></svg>
      <span className="ml-[14px] flex"><Slider at={25} /></span>
      <VSep className="ml-[12px]" />
      <span className="ml-[12px] font-['Liberation_Serif'] text-[14px] font-bold text-[#333]">A</span><i className="h-[2px] w-[3px] bg-[#35c]" />
      <span className="ml-[14px] font-['Liberation_Serif'] text-[14px] font-bold text-[#4a6fd0] underline">A</span><i className="h-[2px] w-[3px] bg-[#35c]" />
      <T w={103} className="mb-0 ml-[14px]">Dialog.bold, 32</T>
      <span className="ml-[13px] flex"><Slider at={43} /></span>
      <span className="ml-[6px] h-[16px] w-[16px] bg-black" />
      <svg width="17" height="17" viewBox="0 0 17 17" className="ml-[5px]"><rect x="1" y="2" width="12" height="13.500" rx="1" fill="#e8ecf4" stroke="#556" /><rect x="4" y=".5" width="6" height="3.500" rx="1" fill="#e5b84f" stroke="#8a6a20" strokeWidth=".7" /><path d="M3.500 7h7M3.500 9.500h4M3.500 12h4" stroke="#7a8296" /><circle cx="12" cy="11.500" r="3" fill="#fff" stroke="#556" /><path d="M14 14l2.500 2.500" stroke="#556" strokeWidth="1.500" /></svg>
      <svg width="10" height="9" viewBox="0 0 10 9" className="ml-auto mr-[8px]"><path d="M5 .5L9 4H1z" fill="#999" stroke="#2e3440" /><path d="M.5 4.500h9v4h-9z" fill="#fff" stroke="#2e3440" /><path d="M2 6.500h6" stroke="#2e3440" /></svg>
    </div>
  );
}
function GraphPanel() {
  return (
    <section className="ml-[4px] mt-[6px] flex h-[910px] w-[1216px] shrink-0 flex-col">
      <div className="flex h-[28px] shrink-0 items-start">
        <div className="flex h-[28px] w-[75px] items-center rounded-t-[3px] border border-b-0 border-[#aaa8a5] pb-px pl-[8px]">
          <T w={41}>Graph</T><Close className="ml-[12px]" />
        </div>
        <div className="ml-auto mr-[4px] mt-[3px]"><NavSet /></div>
      </div>
      <div className="flex flex-1 flex-col border border-[#aaa8a5]">
        <div className="flex h-[28px] shrink-0 items-center font-['DejaVu_Sans'] text-[9.500px]">
          <Script size={27} color="#111" bg="#fff" />
          <T w={43} className="mb-0 ml-[4px] pt-px">Dragging</T>
          <T w={56} className="mb-0 ml-[6px] pt-px text-[#0030ff]">(Configure)</T>
          <VSep className="ml-[70px]" />
        </div>
        <div className="flex h-[816px] shrink-0"><GraphTools /><GraphCanvas /></div>
        <BottomTools />
      </div>
    </section>
  );
}

/* ---------- right column ---------- */
const SmallFolder = () => (
  <svg width="10" height="9" viewBox="0 0 10 9" className="mb-px shrink-0"><path d="M.5 2h4l1-1.500H9L9.500 8.500h-9z" fill="#efcf86" stroke="#c39a4c" strokeWidth=".9" /></svg>
);
const tree: [string, number][] = [["Attributes", 71], ["Dynamic", 59], ["Edges", 42], ["Operator", 64], ["Topology", 64], ["Saved queries", 95]];

function Context() {
  return (
    <section className="flex h-[141px] flex-col">
      <TabBar title="Context" w={55} tabW="w-[83px]" />
      <div className="flex-1 border border-t-0 border-[#aaa8a5] pl-[7px] pt-[3px] leading-[24px]">
        <div className="flex h-[24px]"><T w={49} className="font-bold">Nodes:</T><T w={24} className="ml-[9px]">210</T></div>
        <div className="flex h-[24px]"><T w={47} className="font-bold">Edges:</T><T w={24} className="ml-[11px]">500</T></div>
        <div className="flex h-[24px]"><T w={121}>Undirected Graph</T></div>
      </div>
    </section>
  );
}
function Filters() {
  return (
    <section className="mt-[5px] flex h-[765px] flex-col">
      <TabBar title="Filters" w={43} tabW="w-[71px]" extra={
        <div className="mt-px flex w-[91px] items-center rounded-t-[3px] border-r border-t border-[#bbb9b6] bg-gradient-to-b from-[#f2f1f0] to-[#dad8d6] pl-[7px]"><T w={63}>Statistics</T></div>
      } />
      <div className="flex flex-1 flex-col border border-t-0 border-[#aaa8a5]">
        <div className="flex h-[32px] shrink-0 items-center border-b border-[#d4d2cf] pl-[7px]">
          <T w={38}>Reset</T><VSep className="ml-[12px]" />
          <svg width="16" height="15" viewBox="0 0 16 15" className="ml-[10px]"><rect width="14" height="15" fill="#a3a3a3" /><path d="M2 4h10M2 7.500h10M2 11h10M5 2v11M9 2v11" stroke="#959595" /><path d="M10 9.500h6M13 6.500v6" stroke="#999" strokeWidth="2" /></svg>
          <svg width="16" height="13" viewBox="0 0 16 13" className="ml-[12px]"><rect width="14" height="13" fill="#a3a3a3" /><path d="M9 8h7M12.500 4.500v7" stroke="#8c8c8c" strokeWidth="2" /></svg>
          <span className="ml-[14px] font-['Liberation_Serif'] text-[11px] font-bold text-[#999]">A</span>
          <svg width="7" height="7" className="-ml-px"><path d="M0 3.500h7M3.500 0v7" stroke="#999" strokeWidth="2.500" /></svg>
        </div>
        <div className="h-[260px] shrink-0 bg-white text-[#2e2e2c]">
          <div className="flex h-[21px] items-center pl-[5px]">
            <svg width="16" height="14" viewBox="0 0 16 14" className="mb-[2px]"><path d="M.5 2.500h7l1-2h6l1 1.500v11.500H.5z" fill="#f3d78f" stroke="#c39a4c" /><path d="M8 2.500h7" stroke="#fff" /></svg>
            <T w={48} className="ml-[8px]">Library</T>
          </div>
          {tree.map(([name, w], i) => (
            <div key={name} className="flex h-[20px] items-center pl-[3px]">
              <svg width="7" height="7" className="mb-[3px]">{i < 5 && <path d="M.5.5v5.500L6 3.200z" fill="#777" stroke="#333" />}</svg>
              <span className="ml-[12px] flex"><SmallFolder /></span>
              <T w={w} className="ml-[11px]">{name}</T>
            </div>
          ))}
        </div>
        <div className="flex h-[3px] shrink-0 items-center justify-center gap-[2px] bg-[#f2f1f0]">
          <i className="h-[3px] w-px bg-[#bbb]" /><i className="h-[3px] w-px bg-[#bbb]" /><i className="h-[3px] w-px bg-[#bbb]" />
        </div>
        <div className="h-[397px] shrink-0 bg-white text-[#2e2e2c]">
          <div className="flex h-[21px] items-center pl-[6px]">
            <svg width="13" height="15" viewBox="0 0 13 15"><path d="M.5.800h12L8 7v6.500H5V7z" fill="#b5b5bb" stroke="#77777c" /><path d="M3 14.500h7" stroke="#aaa" /></svg>
            <T w={53} className="ml-[10px]">Queries</T>
          </div>
          <div className="flex h-[20px] items-center pl-[20px]">
            <svg width="15" height="15" viewBox="0 0 15 15" className="mb-[2px]"><circle cx="7" cy="7" r="6.500" fill="#e05757" /><circle cx="7" cy="7" r="4.500" fill="none" stroke="#fff" strokeWidth=".9" /><circle cx="7" cy="7" r="2" fill="none" stroke="#fff" strokeWidth=".9" /><path d="M8.500 11.500h6M11.500 8.500v6" stroke="#1fa31f" strokeWidth="2.500" /></svg>
            <T w={102} className="ml-[9px] italic">Drag filter here</T>
          </div>
        </div>
        <div className="flex flex-1 items-center pb-[2px] pl-[5px] pr-[5px] pt-[5px] text-[#9d9b98]">
          <span className="h-[37px] w-[89px] border-b border-t border-b-[#d4d2cf] border-t-white" />
          <span className={btn + " ml-auto h-[32px] w-[92px] border-[#d0cecb] pl-[12px]"}>
            <span className="h-[14px] w-[14px] bg-[repeating-linear-gradient(135deg,#cfcfcf_0_1px,#e4e4e4_1px_3px)]" /><T w={41} className="ml-[6px]">Select</T>
          </span>
          <span className={btn + " ml-[6px] h-[32px] w-[87px] border-[#d0cecb] pl-[16px]"}><Play gray /><T w={36} className="ml-[6px]">Filter</T></span>
        </div>
      </div>
    </section>
  );
}

export default function App() {
  return (
    <div className="flex h-[1080px] w-[1920px] flex-col overflow-hidden bg-[#f2f1f0] font-['Noto_Sans',sans-serif] text-[14.500px] leading-[20px] text-[#4c4c4c]">
      <TopBar />
      <div className="flex min-h-0 flex-1">
        <Dock />
        <main className="flex w-[1853px] flex-col">
          <TitleAndMenu />
          <Banner />
          <div className="flex h-[32px] shrink-0 items-end border-b-2 border-[#aeac9f]">
            <div className="ml-px flex h-[28px] w-[130px] items-center rounded-t-[3px] border border-b-0 border-[#aaa8a5] pb-[2px] pl-[2px]">
              <svg width="16" height="14" viewBox="0 0 16 14"><rect x=".5" y=".5" width="15" height="13" rx="1" fill="#fff" stroke="#ccc" /><path d="M1 2h14" stroke="#ddd" strokeWidth="2" /><rect x="12.500" y="1" width="2" height="1.500" fill="#d66" /></svg>
              <T w={87} className="ml-[4px]">Workspace 1</T><Close className="ml-[7px]" />
            </div>
            <div className="mb-[6px] ml-auto mr-[4px]"><NavSet /></div>
          </div>
          <div className="flex">
            <div className="ml-[4px] mt-[5px] w-[330px] shrink-0"><Appearance /><Layout /></div>
            <GraphPanel />
            <div className="ml-[4px] mt-[5px] w-[291px] shrink-0"><Context /><Filters /></div>
          </div>
          <div className="flex flex-1 items-center justify-end pr-[5px]">
            <svg width="16" height="16" viewBox="0 0 16 16" className="mt-[4px]"><circle cx="8" cy="7.500" r="7" fill="#6fa8c8" stroke="#3f5f70" /><path d="M5 2l6-1 3 5-4 3-4-3z" fill="#5caf4a" /><path d="M1 7h7l-2 2 4 3 3-2 2 3-5 3-6-4-2 2z" fill="#f5dfa0" stroke="#7a4f14" /></svg>
          </div>
        </main>
      </div>
    </div>
  );
}
